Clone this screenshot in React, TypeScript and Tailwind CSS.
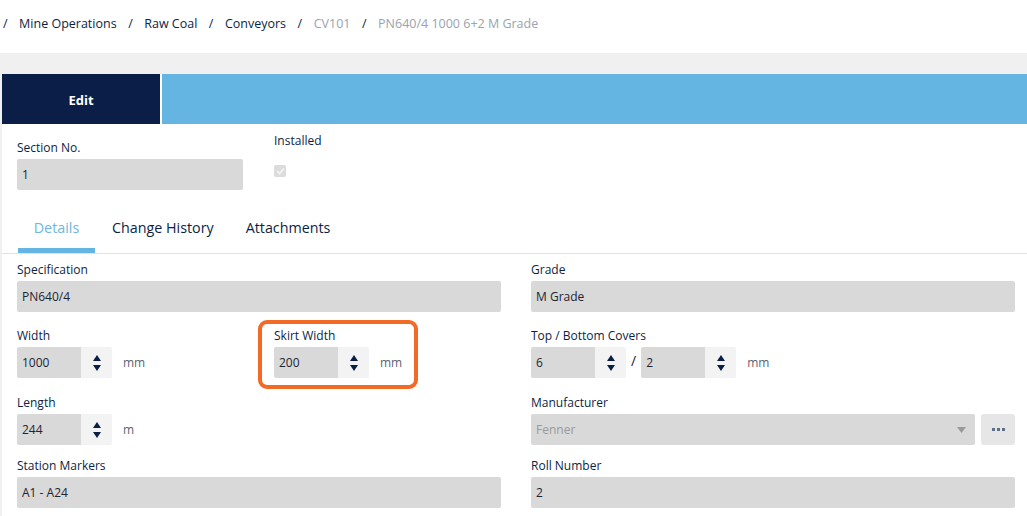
import { ReactNode } from "react";

const Label = ({ children }: { children: ReactNode }) => (
  <p className="text-[12px] leading-[16px] text-[#0b1f45] mb-[3px]">{children}</p>
);

const TextBox = ({ value, className = "" }: { value: string; className?: string }) => (
  <div
    className={`h-[31px] flex items-center px-[5px] bg-[#d9d9d9] rounded-[2px] text-[12px] text-[#1c2533] ${className}`}
  >
    {value}
  </div>
);

const Spinner = ({ value }: { value: string }) => (
  <div className="flex h-[31px]">
    <div className="w-[64px] flex items-center px-[5px] bg-[#d9d9d9] rounded-l-[2px] text-[12px] text-[#1c2533]">
      {value}
    </div>
    <div className="w-[31px] flex flex-col items-center justify-center gap-[4px] bg-[#f3f3f3] rounded-r-[2px]">
      <svg width="8" height="6" viewBox="0 0 8 6">
        <path d="M4 0 L8 6 L0 6 Z" fill="#0b1f45" />
      </svg>
      <svg width="8" height="6" viewBox="0 0 8 6">
        <path d="M0 0 L8 0 L4 6 Z" fill="#0b1f45" />
      </svg>
    </div>
  </div>
);

const Unit = ({ children }: { children: ReactNode }) => (
  <span className="ml-[11px] text-[12px] text-[#5a6472]">{children}</span>
);

const Crumb = ({ children, muted }: { children: ReactNode; muted?: boolean }) => (
  <span className={muted ? "text-[#9aa3ae]" : "text-[#0b1f45]"}>{children}</span>
);

export default function App() {
  return (
    <div
      className="w-[1027px] h-[516px] overflow-hidden bg-white"
      style={{ fontFamily: '"Open Sans", "Liberation Sans", sans-serif' }}
    >
      {/* breadcrumb */}
      <div className="h-[53px] flex items-center pb-[4px] gap-[11.5px] pl-[3px] text-[12.5px]">
        <Crumb>/</Crumb>
        <Crumb>Mine Operations</Crumb>
        <Crumb>/</Crumb>
        <Crumb>Raw Coal</Crumb>
        <Crumb>/</Crumb>
        <Crumb>Conveyors</Crumb>
        <Crumb>/</Crumb>
        <Crumb muted>CV101</Crumb>
        <Crumb>/</Crumb>
        <Crumb muted>PN640/4 1000 6+2 M Grade</Crumb>
      </div>

      <div className="bg-[#f0f0f0] pt-[21px] pl-[2px] h-[463px]">
        <div className="bg-white h-full">
          {/* header */}
          <div className="flex h-[50px]">
            <div className="w-[158px] bg-[#0a1e47] flex items-center justify-center pt-[3px] text-white text-[13px] font-bold">
              Edit
            </div>
            <div className="flex-1 ml-[2px] bg-[#64b5e2]" />
          </div>

          {/* section / installed */}
          <div className="flex px-[15px] pt-[9px]">
            <div className="w-[226px] pt-[7px]">
              <Label>Section No.</Label>
              <TextBox value="1" />
            </div>
            <div className="ml-[31px]">
              <Label>Installed</Label>
              <div className="mt-[16px] w-[12px] h-[12px] rounded-[2px] bg-[#dcdcdc] flex items-center justify-center">
                <svg width="9" height="8" viewBox="0 0 9 8">
                  <path d="M1 4 L3.5 6.5 L8 1.5" stroke="#f5f5f5" strokeWidth="1.6" fill="none" />
                </svg>
              </div>
            </div>
          </div>

          {/* tabs */}
          <div className="mt-[27px] flex px-[16px] border-b border-[#e2e2e2] text-[14.3px]">
            <div className="w-[77px] flex flex-col items-center">
              <span className="text-[#6fb7e0] h-[31px]">Details</span>
              <div className="w-full h-[5px] bg-[#64b5e2]" />
            </div>
            <span className="ml-[17px] text-[#0b1f45]">Change History</span>
            <span className="ml-[32px] text-[#0b1f45]">Attachments</span>
          </div>

          {/* form */}
          <div className="px-[15px] pt-[8px]">
            <div className="grid grid-cols-[484px_484px] gap-x-[30px]">
              <div>
                <Label>Specification</Label>
                <TextBox value="PN640/4" />
              </div>
              <div>
                <Label>Grade</Label>
                <TextBox value="M Grade" />
              </div>
            </div>

            <div className="grid grid-cols-[484px_484px] gap-x-[30px] mt-[16px]">
              <div className="flex">
                <div className="w-[257px]">
                  <Label>Width</Label>
                  <div className="flex items-center">
                    <Spinner value="1000" />
                    <Unit>mm</Unit>
                  </div>
                </div>
                <div className="relative">
                  <Label>Skirt Width</Label>
                  <div className="flex items-center">
                    <Spinner value="200" />
                    <Unit>mm</Unit>
                  </div>
                  <div className="absolute -left-[16px] -top-[8px] -right-[16px] -bottom-[11px] border-[4px] border-[#f26a26] rounded-[9px] pointer-events-none" />
                </div>
              </div>
              <div>
                <Label>Top / Bottom Covers</Label>
                <div className="flex items-center">
                  <Spinner value="6" />
                  <span className="mx-[5px] text-[14px] text-[#1c2533] -mt-[4px]">/</span>
                  <Spinner value="2" />
                  <Unit>mm</Unit>
                </div>
              </div>
            </div>

            <div className="grid grid-cols-[484px_484px] gap-x-[30px] mt-[17px]">
              <div>
                <Label>Length</Label>
                <div className="flex items-center">
                  <Spinner value="244" />
                  <Unit>m</Unit>
                </div>
              </div>
              <div>
                <Label>Manufacturer</Label>
                <div className="flex">
                  <div className="flex-1 h-[31px] flex items-center justify-between px-[5px] bg-[#d9d9d9] rounded-[2px] text-[12px] text-[#9a9a9a]">
                    <span>Fenner</span>
                    <svg width="9" height="6" viewBox="0 0 9 6" className="mr-[4px]">
                      <path d="M0 0 L9 0 L4.5 6 Z" fill="#9a9a9a" />
                    </svg>
                  </div>
                  <div className="ml-[6px] w-[34px] h-[31px] bg-[#e6e6e6] rounded-[3px] flex items-center justify-center gap-[2px]">
                    <span className="w-[3px] h-[3px] bg-[#5f6f8a]" />
                    <span className="w-[3px] h-[3px] bg-[#5f6f8a]" />
                    <span className="w-[3px] h-[3px] bg-[#5f6f8a]" />
                  </div>
                </div>
              </div>
            </div>

            <div className="grid grid-cols-[484px_484px] gap-x-[30px] mt-[13px]">
              <div>
                <Label>Station Markers</Label>
                <TextBox value="A1 - A24" />
              </div>
              <div>
                <Label>Roll Number</Label>
                <TextBox value="2" />
              </div>
            </div>
          </div>
        </div>
      </div>
    </div>
  );
}
